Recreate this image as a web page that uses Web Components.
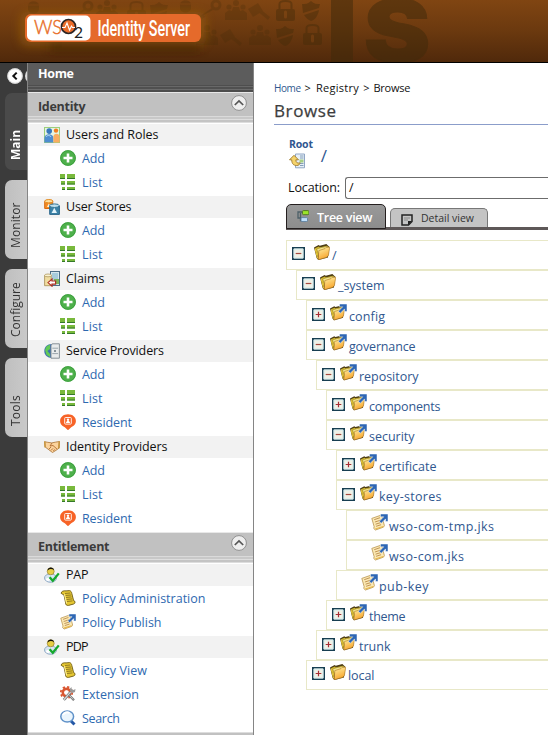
<!DOCTYPE html>
<html lang="en">
<head>
<meta charset="utf-8">
<title>WSO2 Identity Server</title>
<style>
html,body{margin:0;height:735px;overflow:hidden;background:#fff}
body{font-family:"Open Sans","Noto Sans",sans-serif;font-size:12.5px;color:#111}
</style>
</head>
<body>
<is-console></is-console>
<script>
const folder = `<path d="M0 3.4 4.6 1l1.2.8L12.4 0 15 2.4l-1 11L4.4 16 2.6 14z" fill="#4d3d14"/><path d="M1 4.2 5 2.4l.8 1 7-1.6.8 1.8-8.4 3-1.4 6.4z" fill="#d6bd2c"/><path d="M2.6 5 7 3.6l7-1.4-.6 4-9 3z" fill="#f4e58c" stroke="#8d741c" stroke-width=".5"/><path d="M4.8 6.6 11 4.6l1.2-1.2 3.6-.4-1.4 8.6-2 1.8-8.2 2.4z" fill="url(#f)" stroke="#a87420" stroke-width=".6"/><path d="m1.2 5 2.4 9.4" stroke="#e8c63e" stroke-width="1.1"/>`;
const gradF = `<defs><linearGradient id="f" x1="0" y1="0" x2=".4" y2="1"><stop offset="0" stop-color="#fff3a8"/><stop offset="1" stop-color="#f8a52c"/></linearGradient></defs>`;
const arrow = `<path d="M9.5 0H17v7.5h-2.4V4.9l-4.3 4.3-2-1.9 4.4-4.5H9.5z" fill="#2d66b4" stroke="#fff" stroke-width=".5"/>`;
const sheet = `<path d="M.8 4.4 9 1.5l2 .9 2.4 9.3-1 1.5-8 2.8-1.7-1.6.5-1.6z" fill="#fbe9b4" stroke="#b8934e" stroke-width=".8"/><path d="m3.2 5.7 5.8-2M3.9 8l6-1.9M4.6 10.2l5.8-1.8M5.1 12.3l5-1.6" stroke="#b98a4c" stroke-width=".9"/><path d="m4.2 15 8-2.5" stroke="#e8b94e" stroke-width="1.2"/>`;
const person = `<ellipse cx="6.5" cy="11" rx="6" ry="4.3" fill="#d7e5f2" stroke="#7f9cba" stroke-width=".8"/><ellipse cx="4" cy="12.5" rx="2" ry="1.4" fill="#fff"/><circle cx="6.7" cy="4.3" r="3.5" fill="#e8ce46" stroke="#8a7420" stroke-width=".6"/><path d="M3.7 3.4C3.5-.4 9.9-.7 9.9 3.3 8.2 1.7 5.8 1.7 3.7 3.4z" fill="#111"/><path d="m5.6 10.2 3.2 3.6 6-7.4" fill="none" stroke="#16a92d" stroke-width="2.3"/>`;
const scroll = `<path d="M1.2 3.4C1 1.2 4 .5 6 .9l3.4-.3c1.5.2 2.2 1.5 2.4 2.8l1.8 7.2c1.9.2 1.9 2.9.1 3.4L8.6 15.4c-2 .2-3-.6-3-2.5L4 5z" fill="#e5c733" stroke="#6d5a14" stroke-width=".9"/><path d="m5 3.5 5.4-.5M5.5 5.5l5.6-.5M6 7.5l5.6-.6M6.5 9.5l5.6-.6M7 11.5l5.5-.6" stroke="#8a7420" stroke-width=".9"/><path d="M4.4 4.3 6.6 13.5" stroke="#fff3a0"/>`;
const ICONS = {
 users:`<rect x=".5" y=".5" width="15" height="15" fill="#e6f4e2" stroke="#9ccf7c"/><circle cx="5.2" cy="4.1" r="2.8" fill="#3877bd"/><path d="M.4 15.4V11c0-4.9 9-4.9 9 0v4.4z" fill="#4e8dd0"/><circle cx="12" cy="3.6" r="2.2" fill="#f17d20"/><path d="M9.4 15.4V9.6c0-3.9 6.2-3.9 6.2 0v5.8z" fill="#f9ad61"/><path d="M2 10c1-2 4-2 5 0" stroke="#b8d9f4" fill="none"/>`,
 add:`<circle cx="8" cy="8" r="7.8" fill="#4eb04b"/><circle cx="8" cy="8" r="7.4" fill="none" stroke="#339b36" stroke-width=".8"/><path d="M8 3.5v9M3.5 8h9" stroke="#fff" stroke-width="2.6"/>`,
 list:`<path d="M0 0h5v5H0zM7 0h8v5H7zM1 7h4v3.5H1zM7 7h8v3.5H7zM2 13h3v3H2zM7 13h8v3H7z" fill="#79b93c"/><path d="M0 4.5h5M7 4.5h8M1 10h4m2 0h8M2 15.5h3m2 0h8" stroke="#34782a"/>`,
 stores:`<path d="M.7 2.3v7.2h8V2.3z" fill="#f28a22" stroke="#d76b10"/><ellipse cx="4.8" cy="2.2" rx="4.1" ry="1.7" fill="#fde0a0" stroke="#e28b21"/><path d="m3 8 1.8-3.5L6.6 8z" fill="#fff4da"/><path d="M5.7 7v8.4h9.7V7z" fill="#3c83a8" stroke="#2c668a"/><ellipse cx="10.4" cy="6.7" rx="4.8" ry="1.8" fill="#bfe0ee" stroke="#337797"/><path d="M7.6 14 10.3 8.7 13 14z" fill="#e3f3fa"/>`,
 claims:`<rect x="6.5" y=".5" width="9" height="14" fill="#d5e8ee" stroke="#4d6e86"/><path d="M8 2h6v7H8z" fill="#a6ccdc"/><path d="M10 8h5v5h-5z" fill="#7cb45c"/><path d="M.6 4.5v10.2h6.6V4.5z" fill="#f0dda0" stroke="#a58b50" stroke-width=".8"/><ellipse cx="4" cy="4.4" rx="3.5" ry="1.4" fill="#fbf3d2" stroke="#a58b50" stroke-width=".7"/><path d="m4 11.6 4-3.6v2h3.6v3.2H8v2z" fill="#fff" stroke="#ae2c21" stroke-width="1.2"/>`,
 service:`<path d="M8 1C3 1 .3 4 .3 8s3 7 7.7 7z" fill="#3b70ad"/><path d="m2.4 3.4 3.6-2v4.6l-2.6 2 2.6 3v3l-3.4-2L1 7z" fill="#62ca55"/><path d="M7 2.6 8.2.8h7.2v14.4H7z" fill="#e9ebec" stroke="#7c868d" stroke-width=".9"/><path d="M8.3 5.2h5.8M8.3 10.6h5.8" stroke="#9aa5ac"/><path d="M10 7.2h2v1.6h-2z" fill="#65737c"/>`,
 resident:`<path d="M8 .2c4.6 0 7.9 2.8 7.9 6.8 0 3.4-2.5 5.1-4.7 6.3L8 16.2l-3.2-2.9C2.600 12.100.1 10.400.1 7 .1 3 3.400.2 8 .2z" fill="#f76327"/><rect x="4.700" y="3.500" width="6.600" height="6.600" rx=".8" fill="none" stroke="#fff" stroke-width=".9"/><circle cx="8" cy="5.800" r="1.200" fill="#fff"/><path d="M6 8.900c0-2.600 4-2.600 4 0z" fill="#fff"/>`,
 hands:`<path d="m.5 2.700 3.200.6 4 .6 4-.8 3.800-.6-.3 6.500-2.700 2-4 2.500L1.200 8z" fill="#fbd39d" stroke="#aa7233" stroke-width=".8"/><path d="m.8 2.500.3 6M15.200 2.500l-.5 7" stroke="#c8963f" stroke-width="1.500"/><path d="m8 4-2 3 3-.5 4 3.600M5 10l2-2m0 3.400 2-2m.4 2.600 1.300-1.600" fill="none" stroke="#b06a30" stroke-width=".9"/>`,
 person, scroll, publish:sheet+arrow,
 ext:`<circle cx="6.5" cy="6.6" r="3.700" fill="none" stroke="#d95631" stroke-width="2.600"/><circle cx="6.5" cy="6.6" r="5.700" fill="none" stroke="#d95631" stroke-width="1.800" stroke-dasharray="2.200 2.270"/><circle cx="6.500" cy="6.600" r="2" fill="#fff"/><path d="m3.800 13.800 6.800-7.700" stroke="#777" stroke-width="2.700"/><path d="m3.800 13.800 6.800-7.700" stroke="#d6d6d6" stroke-width="1.300"/><path d="M10 2.400 11.500 1l.2 2 1.700 1.100L15.500 3 15 6l-2.600 1L10 5.300z" fill="#9a9a9a"/><path d="m9 9 5 5.300" stroke="#777" stroke-width="2.300"/><path d="m9.600 9.500 3.600 4" stroke="#ccc"/>`,
 search:`<path d="m10.500 10.500 4 4" stroke="#2458a6" stroke-width="3"/><ellipse cx="7.200" cy="6.500" rx="6.400" ry="5.600" fill="#eaf5fd" stroke="#5f91c8" stroke-width="1.500"/><path d="M3 5c1-2.600 4.500-3.300 6.500-2" stroke="#fff" stroke-width="2" fill="none"/>`,
 folder:gradF+folder, linkfolder:gradF+`<g transform="translate(0 1.400) scale(.93)">${folder}</g>`+arrow, sheet:sheet+arrow,
 plus:`<rect x=".8" y=".8" width="11.400" height="11.400" fill="#f0f1e6" stroke="#173e52" stroke-width="1.600"/><path d="M2 2h9v9H2z" fill="none" stroke="#d2ebee"/><path d="M3.700 6.500h5.600M6.500 3.700v5.600" stroke="#a52e35" stroke-width="1.200"/>`,
 minus:`<rect x=".8" y=".8" width="11.400" height="11.400" fill="#f0f1e6" stroke="#173e52" stroke-width="1.600"/><path d="M2 2h9v9H2z" fill="none" stroke="#d2ebee"/><path d="M3.700 6.500h5.600" stroke="#a54a40" stroke-width="1.200"/>`,
 up:`<circle cx="8" cy="8" r="7.400" fill="#eee" stroke="#888" stroke-width=".9"/><path d="M3.800 10 8 5.900l4.200 4.100" fill="none" stroke="#555" stroke-width="1.700"/>`,
 back:`<circle cx="8" cy="8" r="7.700" fill="#fff"/><circle cx="8" cy="8" r="7.300" fill="none" stroke="#ccc" stroke-width=".8"/><path d="M9.700 4.600 6.300 8l3.400 3.400" fill="none" stroke="#111" stroke-width="2"/>`,
 root:`<path d="M6.500 1h9v13.800h-9z" fill="#e6eff8" stroke="#91a7c5"/><path d="M11 3h3.500m-3.500 2h3.500m-3.500 5.500h3.500m-3.500 2h3.500" stroke="#86a0b9"/><path d="M10.500 6.500h4v3h-4z" fill="#a6cf82"/><path d="M5 2.300.5 6.800h2.200c.1 4 1.800 5.700 5 5.700 1.900 0 3.200-1 3.400-2.800-.9.500-2.500.4-3.200-.1-.7-.6-1-1.500-1-2.800h2.600z" fill="#f5d36b" stroke="#9e792b" stroke-width=".9"/>`,
 tree:`<path d="M3.500 3v7.700H6M5 2H1v6h4" fill="none" stroke="#4d6068" stroke-width="1.300"/><rect x="5.500" y=".6" width="6.400" height="4.100" rx="1" fill="#9be52b" stroke="#4b721e" stroke-width=".9"/><rect x="4" y="7.600" width="6.500" height="4" rx="1" fill="#bfdffb" stroke="#5a7e9f" stroke-width=".9"/>`,
 note:`<path d="M1 1h10v6.500L7.500 11H1z" fill="#c4c4c4" stroke="#222" stroke-width="1.500"/><path d="M7 11V7h4z" fill="#222"/><path d="M3 4h6M3 6h4" stroke="#888"/>`
};
const VB = {plus:13,minus:13,tree:12,note:12,linkfolder:17,publish:17,sheet:17};

class UiIcon extends HTMLElement{
 connectedCallback(){
  const n=this.getAttribute('name'), v=VB[n]||16;
  this.attachShadow({mode:'open'}).innerHTML=`<style>:host{display:block;flex:none;width:${v}px;height:${v}px}svg{display:block;width:100%;height:100%}</style><svg viewBox="0 0 ${v} ${v}">${ICONS[n]}</svg>`;
 }
}
customElements.define('ui-icon',UiIcon);

/* A one-line label whose tracking is set so that it fills the width in "w". */
class FitText extends HTMLElement{
 connectedCallback(){
  this.attachShadow({mode:'open'}).innerHTML=`<style>:host{display:block;flex:none;white-space:pre}span{display:inline-block}</style><span><slot></slot></span>`;
  const s=this.shadowRoot.querySelector('span'), w=+this.getAttribute('w'), n=this.textContent.length;
  if(w&&n>1) s.style.letterSpacing=((w-s.getBoundingClientRect().width)/(n-1))+'px';
 }
}
customElements.define('fit-text',FitText);

class BrandHeader extends HTMLElement{
 connectedCallback(){
  this.attachShadow({mode:'open'}).innerHTML=`<style>
:host{display:block;height:62px;border-bottom:1px solid #000;background:linear-gradient(#804512,#6b390f 50%,#50290b)}
svg{display:block}</style>
<svg width="548" height="62" viewBox="0 0 548 62">
<defs>
<filter id="b" x="-20%" y="-60%" width="140%" height="220%"><feGaussianBlur stdDeviation="5"/></filter>
<g id="lock"><rect y="9" width="19" height="12" rx="2"/><path d="M3.500 9V4c0-4 12-4 12 0v5" fill="none" stroke="#432b09" stroke-width="2"/><path d="M9.500 12v5" stroke="#7b4513" stroke-width="3" stroke-linecap="round"/></g>
<g id="shield"><path d="M9 0c3 3 6 3 9 3l-1 4L1 12 0 3c3 0 6 0 9-3zM17 9c-1 6-4 10-8 11-3-1-5-3-7-6z"/></g>
<g id="gavel"><path d="m0 7 10-6 5 8-10 6zM11 6l11 9-2 3-11-9z"/></g>
<g id="people"><circle cx="11" cy="3" r="3"/><circle cx="4" cy="7" r="2.600"/><circle cx="18" cy="7" r="2.600"/><path d="M0 20v-7l4-3 3 1 1-4h6l1 4 3-1 4 3v7z"/></g>
<g id="face"><path d="M1 4C2-1 11-1 12 4v5c-2 5-9 5-11 0z"/><path d="M0 4h13" stroke="#7b4513"/></g>
<g id="key"><circle cx="16" cy="5" r="4" fill="none" stroke="#432b09" stroke-width="3"/><path d="m12 8-12 8 2 3 3-2-1-2 9-5z"/></g>
</defs>
<g fill="#432b09"><g opacity=".25">
<use href="#face" x="27" y="1"/><use href="#key" x="72" y="1"/><use href="#people" x="96"/><use href="#lock" x="127" y="1"/><use href="#shield" x="150" y="2"/><use href="#face" x="179"/><use href="#key" x="200"/><use href="#people" x="225"/><use href="#gavel" x="248" y="2"/>
<use href="#people" x="196" y="25"/><use href="#gavel" x="220" y="28"/><use href="#people" x="249" y="25"/><use href="#people" x="40" y="28"/></g><g opacity=".42">
<use href="#lock" x="276" y="0"/><use href="#shield" x="302" y="1"/><use href="#shield" x="276" y="26"/><use href="#lock" x="303" y="24"/></g></g>
<g fill="#3f2a0b" stroke="#3f2a0b" opacity=".5" font-family="Inter" font-weight="900"><text x="327.500" y="62" font-size="86" textLength="29" lengthAdjust="spacingAndGlyphs" stroke-width="2">I</text><text x="363.500" y="62" font-size="86" textLength="67" lengthAdjust="spacingAndGlyphs" stroke-width="1">S</text></g>
<rect x="20" y="12" width="186" height="34" rx="8" fill="#9a5d11" opacity=".65" filter="url(#b)"/>
<rect x="50" y="43" width="150" height="9" fill="#351a05" opacity=".5" filter="url(#b)"/>
<rect x="25" y="14" width="176" height="28" rx="6" fill="#e56a2b"/><rect x="27" y="15.600" width="63.500" height="24.800" rx="5" fill="#fff"/>
<g font-family="Lato"><text x="34" y="34" font-size="20" font-weight="300" fill="#e8702c" stroke="#e8702c" stroke-width=".5" textLength="28" lengthAdjust="spacingAndGlyphs">WS</text>
<text x="74" y="37.500" font-size="16" fill="#222" textLength="9" lengthAdjust="spacingAndGlyphs">2</text></g>
<circle cx="68.500" cy="26.500" r="7" fill="#ea6c2b" stroke="#2b2525" stroke-width="1.700"/><path d="M62 27.500h3l2-4.500 2.500 7 2-4 1 1.500H75" fill="none" stroke="#fff" stroke-width="1.100"/>
<text x="97.500" y="36" font-family="Roboto" font-size="22.500" font-weight="500" fill="#fff" textLength="92.500" lengthAdjust="spacingAndGlyphs">Identity Server</text>
</svg>`;
 }
}
customElements.define('brand-header',BrandHeader);

class SideTab extends HTMLElement{
 connectedCallback(){
  this.attachShadow({mode:'open'}).innerHTML=`<style>
:host{display:flex;box-sizing:border-box;width:22px;height:79px;background:linear-gradient(90deg,#c9c9c9,#bfbfbf);color:#333;writing-mode:vertical-rl;transform:rotate(180deg);border-radius:0 7px 7px 0;align-items:center;justify-content:flex-start;padding-top:11px;font-size:12px;line-height:22px;letter-spacing:var(--ls,0)}
:host([active]){background:#4a4a4a;color:#fff;font-weight:700;height:77px;padding-top:10px}</style><slot></slot>`;
 }
}
customElements.define('side-tab',SideTab);

class MenuSection extends HTMLElement{
 connectedCallback(){
  this.attachShadow({mode:'open'}).innerHTML=`<style>
:host{display:block}
header{display:flex;box-sizing:border-box;height:32px;padding:3px 6px 0 10px;justify-content:space-between;background:linear-gradient(#e8e8e8 0 1px,#c1c1c1 1px 24px,#dadada 24px 25px,#c8c8c8 25px 27px,#dedede 27px 28px,#c4c4c4 28px 30px,#ddd 30px 31px,#fff 31px);color:#3b3b3b;font-weight:700;line-height:23px}
</style><header><fit-text w="${this.getAttribute('w')}">${this.getAttribute('label')}</fit-text><ui-icon name="up"></ui-icon></header><slot></slot>`;
 }
}
customElements.define('menu-section',MenuSection);

class MenuGroup extends HTMLElement{
 connectedCallback(){
  this.attachShadow({mode:'open'}).innerHTML=`<style>
:host{display:block;padding-bottom:1px}
div{display:flex;align-items:center;height:22px;margin-bottom:1px;padding-left:16px;gap:6px;background:#f2f2f2;color:#111;line-height:22px}
</style><div><ui-icon name="${this.getAttribute('icon')}"></ui-icon><fit-text w="${this.getAttribute('w')}">${this.getAttribute('label')}</fit-text></div><slot></slot>`;
 }
}
customElements.define('menu-group',MenuGroup);

class MenuItem extends HTMLElement{
 connectedCallback(){
  this.attachShadow({mode:'open'}).innerHTML=`<style>
:host{display:flex;align-items:center;height:24px;padding-left:32px;gap:6px;color:#2e69b0;line-height:24px}ui-icon{width:16px;height:16px;margin-top:-2px}
</style><ui-icon name="${this.getAttribute('icon')}"></ui-icon><fit-text w="${this.getAttribute('w')}">${this.getAttribute('label')}</fit-text>`;
 }
}
customElements.define('menu-item',MenuItem);

class TreeRow extends HTMLElement{
 connectedCallback(){
  const a=k=>this.getAttribute(k), link=a('icon')!=='folder', lvl=+a('level');
  const box=a('box');
  this.attachShadow({mode:'open'}).innerHTML=`<style>
:host{display:flex;box-sizing:border-box;height:30px;margin-left:${lvl*10}px;border:1px solid #e8e8c8;border-right:0;padding-left:5px;color:#30578f}
.b{width:13px;margin-top:${link?7:6}px}.i{margin:3px 0 0 ${lvl===0?9:box?5:6}px}fit-text{margin:${link?7:6}px 0 0 ${lvl===0?2:a('icon')==='folder'?2:box?2:1}px;line-height:18px}
</style><div class="b">${box?`<ui-icon name="${box}"></ui-icon>`:''}</div><ui-icon class="i" name="${a('icon')}"></ui-icon><fit-text w="${a('w')}">${a('label')}</fit-text>`;
 }
}
customElements.define('tree-row',TreeRow);

class RegistryBrowser extends HTMLElement{
 connectedCallback(){
  const rows=[[0,'minus','folder','/',0],[1,'minus','folder','_system',46.500],[2,'plus','linkfolder','config',36],[2,'minus','linkfolder','governance',66.500],[3,'minus','linkfolder','repository',59.500],[4,'plus','linkfolder','components',71.500],[4,'minus','linkfolder','security',45.500],[5,'plus','linkfolder','certificate',57.500],[5,'minus','linkfolder','key-stores',62.500],[6,'','sheet','wso-com-tmp.jks',105],[6,'','sheet','wso-com.jks',75],[5,'','sheet','pub-key',49.500],[4,'plus','linkfolder','theme',36.500],[3,'plus','linkfolder','trunk',31.500],[2,'plus','folder','local',26.500]];
  this.attachShadow({mode:'open'}).innerHTML=`<style>
:host{display:block;padding-left:20px;overflow:hidden}
nav{display:flex;align-items:baseline;height:18px;margin-top:16px;font-size:11px;line-height:18px;gap:4px}
nav .h{font-size:10px;color:#30578f}
nav .r{margin-left:1px}
h1{display:flex;margin:0;height:27px;border-bottom:1px solid #8b9dca;font-size:17px;line-height:28px;font-weight:400;color:#3d3d3d;-webkit-text-stroke:.25px #3d3d3d}
.root{display:flex;height:40px;margin:12px 0 0 15px;color:#30578f}
.root b{font-size:10.500px;line-height:15px;display:block;height:16px}
.root .s{font-size:17px;line-height:24px;margin:7px 0 0 8px}
.loc{display:flex;margin-left:14px;line-height:22px;font-size:12.500px}
.in{box-sizing:border-box;flex:1;height:22px;margin-left:5px;border:1px solid #6c6c6c;border-right:0;border-radius:3px 0 0 3px;padding-left:3px;line-height:19px}
.tabs{display:flex;align-items:flex-end;height:27px;margin:4px 0 0 12px;background:linear-gradient(#5e5858,#5e5858) 0 100%/100% 3px no-repeat}
.t{display:flex;box-sizing:border-box;width:100px;height:25px;margin-bottom:1px;border:1px solid #241f1f;border-radius:5px 5px 0 0;background:linear-gradient(#999,#8d8d8d);color:#fff;font-weight:600;padding:5px 0 0 10px;line-height:16px;font-size:12.500px;gap:8px}
.t ui-icon{width:12px;height:12px}
.d{display:flex;box-sizing:border-box;width:98px;height:19px;margin:0 0 3px 4px;border:1px solid #777;border-bottom:0;border-radius:5px 5px 0 0;background:#c4c4c4;color:#333;font-size:10.500px;padding:1px 0 0 10px;line-height:17px;gap:8px}
.d ui-icon{margin-top:4px}
.tree{margin:10px 0 0 12px}
</style>
<nav><fit-text class="h" w="27">Home</fit-text><span>&gt;</span><fit-text class="r" w="43">Registry</fit-text><span>&gt;</span><fit-text w="37">Browse</fit-text></nav>
<h1><fit-text w="62">Browse</fit-text></h1>
<div class="root"><div><b><fit-text w="24">Root</fit-text></b><ui-icon name="root"></ui-icon></div><span class="s">/</span></div>
<div class="loc"><fit-text w="52">Location:</fit-text><div class="in">/</div></div>
<div class="tabs"><div class="t"><ui-icon name="tree"></ui-icon><fit-text w="55.500">Tree view</fit-text></div><div class="d"><ui-icon name="note"></ui-icon><fit-text w="53">Detail view</fit-text></div></div>
<div class="tree">${rows.map(r=>`<tree-row level="${r[0]}" box="${r[1]}" icon="${r[2]}" label="${r[3]}" w="${r[4]}"></tree-row>`).join('')}</div>`;
 }
}
customElements.define('registry-browser',RegistryBrowser);

class IsConsole extends HTMLElement{
 connectedCallback(){
  const it=(i,l,w)=>`<menu-item icon="${i}" label="${l}" w="${w}"></menu-item>`, A=it('add','Add',23), L=it('list','List',20.500), R=it('resident','Resident',50);
  this.attachShadow({mode:'open'}).innerHTML=`<style>
:host{display:block;height:735px;overflow:hidden}
main{display:grid;grid-template-columns:27px 227px 1fr;height:672px}
.rail{display:flex;flex-direction:column;align-items:flex-end;gap:10px;background:#3b3b3b;overflow:hidden}
.back{display:flex;gap:2px;width:20px;padding-top:5px;box-sizing:border-box;height:20px}
.back i{flex:none;width:16px;height:16px;border-radius:8px;background:#ddd}
.menu{box-sizing:border-box;border:solid #858585;border-width:0 1px;background:#fff;overflow:hidden}
.home{box-sizing:border-box;height:29px;padding-left:10px;color:#fff;font-weight:700;line-height:21px;background:linear-gradient(#5c5c5c 0 22px,#4e4e4e 22px 23px,#686868 23px 24px,#505050 24px 26px,#6b6b6b 26px 27px,#4d4d4d 27px)}
.end{height:3px;background:linear-gradient(#ddd 1px,#c1c1c1 1px)}
</style><brand-header></brand-header><main>
<div class="rail"><div class="back"><ui-icon name="back"></ui-icon><i></i></div><side-tab active>Main</side-tab><side-tab style="--ls:.1px">Monitor</side-tab><side-tab>Configure</side-tab><side-tab style="--ls:.2px">Tools</side-tab></div>
<div class="menu"><div class="home"><fit-text w="36">Home</fit-text></div>
<menu-section label="Identity" w="47.500">
<menu-group icon="users" label="Users and Roles" w="92.500">${A+L}</menu-group>
<menu-group icon="stores" label="User Stores" w="65.500">${A+L}</menu-group>
<menu-group icon="claims" label="Claims" w="38.500">${A+L}</menu-group>
<menu-group icon="service" label="Service Providers" w="98">${A+L+R}</menu-group>
<menu-group icon="hands" label="Identity Providers" w="101.500">${A+L+R}</menu-group>
</menu-section>
<menu-section label="Entitlement" w="71.500">
<menu-group icon="person" label="PAP" w="22.500">${it('scroll','Policy Administration',123.500)+it('publish','Policy Publish',79.500)}</menu-group>
<menu-group icon="person" label="PDP" w="22.500">${it('scroll','Policy View',65)+it('ext','Extension',57)+it('search','Search',38)}</menu-group>
</menu-section><div class="end"></div></div>
<registry-browser></registry-browser></main>`;
 }
}
customElements.define('is-console',IsConsole);
</script>
</body>
</html>
